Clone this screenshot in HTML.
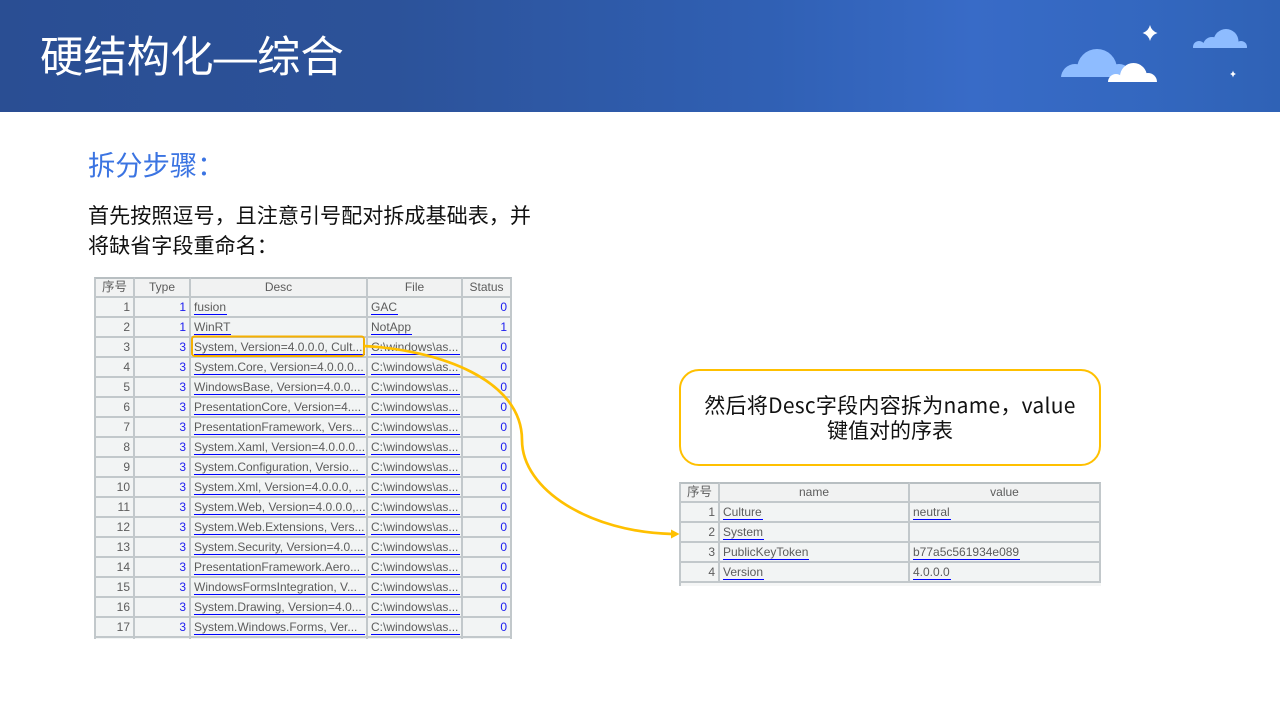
<!DOCTYPE html>
<html lang="zh">
<head>
<meta charset="utf-8">
<title>硬结构化—综合</title>
<style>
*{box-sizing:border-box}
html,body{margin:0;padding:0;background:#fff}
body{width:1280px;height:720px;position:relative;overflow:hidden;font-family:"Noto Sans CJK SC","WenQuanYi Zen Hei",sans-serif}
.hd{position:absolute;left:0;top:0;width:1280px;height:112px;background:linear-gradient(90deg,#2a4e93 0%,#2c5299 30%,#3060b4 60%,#386bc7 76%,#3367bf 90%,#2f62b6 100%)}
.t{position:absolute;white-space:nowrap;line-height:1}
h1{position:absolute;margin:0;left:40px;top:32px;font-size:43.4px;font-weight:400;color:#fff;line-height:44px;white-space:nowrap}
h1 span{font-family:"Liberation Sans",sans-serif;font-size:43.4px;display:inline-block;width:43.4px}
.sub{left:88px;top:150px;font-size:27.3px;color:#3b74e2}
.body{left:88px;font-size:21.1px;color:#111}
.wrap{position:absolute;overflow:hidden;background:#fff}
table{border-collapse:separate;border-spacing:0;table-layout:fixed;font-family:"Liberation Sans","Noto Sans CJK SC",sans-serif;font-size:12px;color:#5c5c5c;position:absolute;left:0;top:0}
td,th{height:20px;padding:0 3px;background:#f2f4f4;border-right:2px solid #c2c8cb;border-bottom:2px solid #c2c8cb;font-weight:400;white-space:nowrap;overflow:hidden;line-height:18px;vertical-align:top;text-align:left}
th{text-align:center;background:#f1f2f2;padding:0;line-height:16px}
tr td:first-child,tr th:first-child{border-left:2px solid #c2c8cb;text-align:right;padding-right:3px}
tr th:first-child{text-align:center;font-size:12.5px;padding:0}
tr:first-child th{border-top:2px solid #b8bfc2;height:21px}
td.n{text-align:right;color:#1c1cf0;padding-right:3px}
td u{text-decoration:none;display:inline-block;border-bottom:1px solid #0000ff;height:17px;line-height:18px;padding:0 1px 0 0}
td.f{padding:0 1px 0 3px}
td.f u{display:block;padding:0}
td.e{background:#f5f6f6;border-right:0;border-bottom:2px solid #d0d4d6}
.call{position:absolute;left:679px;top:369px;width:422px;height:97px;border:2px solid #ffc000;border-radius:20px;background:#fff;text-align:center;font-size:21px;color:#111;line-height:25px;padding-top:22px}
.call span{letter-spacing:.28px}
svg.ov{position:absolute;left:0;top:0;pointer-events:none}
</style>
</head>
<body>
<div class="hd"></div>
<svg class="ov" width="1280" height="112" viewBox="0 0 1280 112">
<defs>
<clipPath id="ca"><rect x="1050" y="40" width="90" height="37"/></clipPath>
<clipPath id="cb"><rect x="1100" y="55" width="70" height="27"/></clipPath>
<clipPath id="cc"><rect x="1185" y="20" width="70" height="28"/></clipPath>
</defs>
<g fill="#8ebcff" clip-path="url(#ca)"><circle cx="1097" cy="69" r="20"/><circle cx="1075" cy="78" r="14"/><circle cx="1119" cy="77" r="13"/></g>
<g fill="#fff" clip-path="url(#cb)"><circle cx="1133.500" cy="76.500" r="13.500"/><circle cx="1116" cy="82" r="8"/><circle cx="1148" cy="82" r="9"/></g>
<g fill="#8ebcff" clip-path="url(#cc)"><circle cx="1226" cy="41.500" r="12.500"/><circle cx="1212" cy="46" r="9"/><circle cx="1199" cy="47" r="6"/><circle cx="1241" cy="47" r="6"/></g>
<path fill="#fff" d="M1150 25Q1151.500 31 1157.500 33Q1151.500 35 1150 41Q1148.500 35 1142.500 33Q1148.500 31 1150 25Z"/>
<path fill="#fff" d="M1233 70.500Q1233.600 73.400 1236 74Q1233.600 74.600 1233 77.500Q1232.400 74.600 1230 74Q1232.400 73.400 1233 70.500Z"/>
</svg>
<h1>硬结构化<span>—</span>综合</h1>
<div class="t sub">拆分步骤&#xFF1A;</div>
<div class="t body" style="top:205px">首先按照逗号&#xFF0C;且注意引号配对拆成基础表&#xFF0C;并</div>
<div class="t body" style="top:235px">将缺省字段重命名&#xFF1A;</div>

<div class="wrap" style="left:94px;top:277px;width:420px;height:362px">
<table style="width:418px">
<colgroup><col style="width:41px"><col style="width:56px"><col style="width:177px"><col style="width:95px"><col style="width:49px"></colgroup>
<tr><th>序号</th><th>Type</th><th>Desc</th><th>File</th><th>Status</th></tr>
<tr><td>1</td><td class="n">1</td><td><u>fusion</u></td><td><u>GAC</u></td><td class="n">0</td></tr>
<tr><td>2</td><td class="n">1</td><td><u>WinRT</u></td><td><u>NotApp</u></td><td class="n">1</td></tr>
<tr><td>3</td><td class="n">3</td><td class="f"><u>System, Version=4.0.0.0, Cult...</u></td><td class="f"><u>C:\windows\as...</u></td><td class="n">0</td></tr>
<tr><td>4</td><td class="n">3</td><td class="f"><u>System.Core, Version=4.0.0.0...</u></td><td class="f"><u>C:\windows\as...</u></td><td class="n">0</td></tr>
<tr><td>5</td><td class="n">3</td><td class="f"><u>WindowsBase, Version=4.0.0...</u></td><td class="f"><u>C:\windows\as...</u></td><td class="n">0</td></tr>
<tr><td>6</td><td class="n">3</td><td class="f"><u>PresentationCore, Version=4....</u></td><td class="f"><u>C:\windows\as...</u></td><td class="n">0</td></tr>
<tr><td>7</td><td class="n">3</td><td class="f"><u>PresentationFramework, Vers...</u></td><td class="f"><u>C:\windows\as...</u></td><td class="n">0</td></tr>
<tr><td>8</td><td class="n">3</td><td class="f"><u>System.Xaml, Version=4.0.0.0...</u></td><td class="f"><u>C:\windows\as...</u></td><td class="n">0</td></tr>
<tr><td>9</td><td class="n">3</td><td class="f"><u>System.Configuration, Versio...</u></td><td class="f"><u>C:\windows\as...</u></td><td class="n">0</td></tr>
<tr><td>10</td><td class="n">3</td><td class="f"><u>System.Xml, Version=4.0.0.0, ...</u></td><td class="f"><u>C:\windows\as...</u></td><td class="n">0</td></tr>
<tr><td>11</td><td class="n">3</td><td class="f"><u>System.Web, Version=4.0.0.0,...</u></td><td class="f"><u>C:\windows\as...</u></td><td class="n">0</td></tr>
<tr><td>12</td><td class="n">3</td><td class="f"><u>System.Web.Extensions, Vers...</u></td><td class="f"><u>C:\windows\as...</u></td><td class="n">0</td></tr>
<tr><td>13</td><td class="n">3</td><td class="f"><u>System.Security, Version=4.0....</u></td><td class="f"><u>C:\windows\as...</u></td><td class="n">0</td></tr>
<tr><td>14</td><td class="n">3</td><td class="f"><u>PresentationFramework.Aero...</u></td><td class="f"><u>C:\windows\as...</u></td><td class="n">0</td></tr>
<tr><td>15</td><td class="n">3</td><td class="f"><u>WindowsFormsIntegration, V...</u></td><td class="f"><u>C:\windows\as...</u></td><td class="n">0</td></tr>
<tr><td>16</td><td class="n">3</td><td class="f"><u>System.Drawing, Version=4.0...</u></td><td class="f"><u>C:\windows\as...</u></td><td class="n">0</td></tr>
<tr><td>17</td><td class="n">3</td><td class="f"><u>System.Windows.Forms, Ver...</u></td><td class="f"><u>C:\windows\as...</u></td><td class="n">0</td></tr>
<tr><td></td><td></td><td></td><td></td><td></td></tr>
</table>
</div>

<div class="call"><span>然后将Desc字段内容拆为name&#xFF0C;value</span><br>键值对的序表</div>

<div class="wrap" style="left:679px;top:482px;width:422px;height:104px">
<table style="width:422px">
<colgroup><col style="width:41px"><col style="width:190px"><col style="width:191px"></colgroup>
<tr><th>序号</th><th>name</th><th>value</th></tr>
<tr><td>1</td><td><u>Culture</u></td><td><u>neutral</u></td></tr>
<tr><td>2</td><td><u>System</u></td><td></td></tr>
<tr><td>3</td><td><u>PublicKeyToken</u></td><td><u>b77a5c561934e089</u></td></tr>
<tr><td>4</td><td><u>Version</u></td><td><u>4.0.0.0</u></td></tr>
<tr><td class="e"></td><td class="e"></td><td class="e"></td></tr>
</table>
</div>

<svg class="ov" width="1280" height="720" viewBox="0 0 1280 720">
<rect x="192" y="336.500" width="172" height="19.500" rx="2.500" fill="none" stroke="#f5b000" stroke-width="2"/>
<path d="M364 346C440 350 522 380 522 440C522 490 590 532 672 534" fill="none" stroke="#ffc000" stroke-width="2.700"/>
<path d="M671 529.500L679.500 534L671 538.500Z" fill="#ffc000"/>
</svg>
</body>
</html>
